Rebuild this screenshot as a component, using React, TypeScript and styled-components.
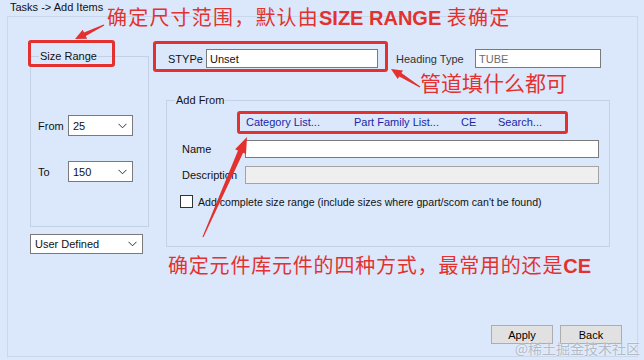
import React from 'react';
import styled, { createGlobalStyle } from 'styled-components';

const RED = '#e3312f';
const BG = '#dbe8fb';

const GlobalStyle = createGlobalStyle`
  html, body { margin: 0; padding: 0; }
  body { background: ${BG}; font-family: "Liberation Sans", Arial, sans-serif; }
`;

const Window = styled.div`
  position: relative;
  width: 644px;
  height: 360px;
  overflow: hidden;
  background: ${BG};
  font-size: 11px;
  color: #111;
`;

const Title = styled.div`
  height: 16px;
  padding-left: 10px;
  line-height: 15px;
  font-size: 11px;
`;

const Frame = styled.div`
  margin-left: 7px;
  width: 631px;
  height: 341px;
  box-sizing: border-box;
  border: 1px solid #c9d7ec;
  display: flex;
  flex-direction: column;
`;

const TopArea = styled.div`
  display: flex;
  height: 237px;
`;

const LeftCol = styled.div`
  margin-left: 22px;
  padding-top: 39px;
  width: 119px;
  display: flex;
  flex-direction: column;
`;

const RightCol = styled.div`
  margin-left: 4px;
  display: flex;
  flex-direction: column;
`;

const GroupBox = styled.div<{ $w: number; $h: number }>`
  position: relative;
  box-sizing: border-box;
  width: ${(p) => p.$w}px;
  height: ${(p) => p.$h}px;
  border: 1px solid #c3d1e7;
  display: flex;
  flex-direction: column;
`;

const Legend = styled.span`
  position: absolute;
  top: -8px;
  left: 8px;
  padding: 0 1px;
  background: ${BG};
  line-height: 14px;
  font-size: 11px;
`;

const SizeRow = styled.div<{ $top: number }>`
  display: flex;
  align-items: center;
  margin-top: ${(p) => p.$top}px;
  padding-left: 7px;
  height: 21px;
`;

const Label = styled.span<{ $w: number }>`
  width: ${(p) => p.$w}px;
  flex: none;
  font-size: 11px;
  white-space: nowrap;
`;

const SelectBox = styled.div<{ $w: number; $h: number }>`
  box-sizing: border-box;
  width: ${(p) => p.$w}px;
  height: ${(p) => p.$h}px;
  border: 1px solid #7a7a7a;
  background: #fff;
  display: flex;
  align-items: center;
  justify-content: space-between;
  padding: 0 5px 0 4px;
  font-size: 11px;
`;

const UserDefined = styled.div`
  margin-top: 7px;
`;

const HeaderRow = styled.div`
  display: flex;
  align-items: center;
  margin-top: 32px;
  padding-left: 15px;
  height: 19px;
`;

const TextInput = styled.div<{ $w: number; $h: number; $muted?: boolean; $disabled?: boolean }>`
  box-sizing: border-box;
  width: ${(p) => p.$w}px;
  height: ${(p) => p.$h}px;
  border: 1px solid ${(p) => (p.$disabled ? '#a3a3a3' : '#7a7a7a')};
  background: ${(p) => (p.$disabled ? '#efefef' : '#fff')};
  color: ${(p) => (p.$muted ? '#6d6d6d' : '#111')};
  padding-left: 3px;
  display: flex;
  align-items: center;
  font-size: 11px;
`;

const HeadingLabel = styled(Label)`
  margin-left: 18px;
  color: #333;
`;

const AddFromWrap = styled.div`
  margin-top: 32px;
  margin-left: 13px;
`;

const LinksRow = styled.div`
  display: grid;
  grid-template-columns: 108px 107px 37px auto;
  margin-top: 13px;
  padding-left: 79px;
  height: 16px;
  align-items: center;
`;

const LinkText = styled.span`
  color: #1c27a8;
  font-size: 11px;
  white-space: nowrap;
`;

const FormRow = styled.div<{ $top: number }>`
  display: flex;
  align-items: center;
  margin-top: ${(p) => p.$top}px;
  padding-left: 15px;
  height: 18px;
`;

const CheckRow = styled.div`
  display: flex;
  align-items: center;
  margin-top: 11px;
  padding-left: 13px;
  height: 13px;
  font-size: 10.6px;
  white-space: nowrap;
`;

const CheckBox = styled.span`
  box-sizing: border-box;
  width: 13px;
  height: 13px;
  border: 1px solid #333;
  background: #fff;
  margin-right: 5px;
  flex: none;
`;

const ButtonRow = styled.div`
  display: flex;
  justify-content: flex-end;
  gap: 7px;
  margin-top: 71px;
  padding-right: 15px;
`;

const Button = styled.div`
  box-sizing: border-box;
  width: 62px;
  height: 19px;
  border: 1px solid #adadad;
  background: #e1e1e1;
  display: flex;
  align-items: center;
  justify-content: center;
  font-size: 11px;
  color: #000;
`;

const Watermark = styled.div`
  position: absolute;
  right: 4px;
  bottom: 4px;
  font-family: "Noto Sans CJK SC", sans-serif;
  font-size: 14px;
  line-height: 16px;
  color: rgba(160, 168, 180, 0.75);
  text-shadow: 0 0 2px rgba(255, 255, 255, 0.8);
`;

/* annotation overlays */
const RedBox = styled.div<{ $x: number; $y: number; $w: number; $h: number }>`
  position: absolute;
  left: ${(p) => p.$x}px;
  top: ${(p) => p.$y}px;
  width: ${(p) => p.$w}px;
  height: ${(p) => p.$h}px;
  box-sizing: border-box;
  border: 3px solid ${RED};
  border-radius: 3px;
`;

const Note = styled.div<{ $x: number; $y: number; $size: number; $track: number }>`
  position: absolute;
  left: ${(p) => p.$x}px;
  top: ${(p) => p.$y}px;
  font-family: "Noto Sans CJK SC", sans-serif;
  font-size: ${(p) => p.$size}px;
  letter-spacing: ${(p) => p.$track}px;
  line-height: 1;
  color: ${RED};
  white-space: nowrap;

  b {
    font-family: "Liberation Sans", "Noto Sans CJK SC", sans-serif;
    font-weight: 700;
    letter-spacing: 0;
  }
`;

const ArrowLayer = styled.svg`
  position: absolute;
  left: 0;
  top: 0;
  pointer-events: none;
`;

const Chevron = () => (
  <svg width="9" height="6" viewBox="0 0 9 6">
    <polyline points="0.5,0.8 4.5,4.8 8.5,0.8" fill="none" stroke="#333" strokeWidth="1" />
  </svg>
);

const Select: React.FC<{ w: number; h: number; value: string }> = ({ w, h, value }) => (
  <SelectBox $w={w} $h={h}>
    <span>{value}</span>
    <Chevron />
  </SelectBox>
);

// tapered annotation arrow, tail -> tip
const arrowPoints = (x1: number, y1: number, x2: number, y2: number, head = 12, hw = 6, sw = 2.5) => {
  const dx = x2 - x1;
  const dy = y2 - y1;
  const len = Math.hypot(dx, dy);
  const ux = dx / len;
  const uy = dy / len;
  const nx = -uy;
  const ny = ux;
  const bx = x2 - ux * head;
  const by = y2 - uy * head;
  const pts = [
    [x1 + nx * 0.6, y1 + ny * 0.6],
    [bx + nx * sw, by + ny * sw],
    [bx + nx * hw, by + ny * hw],
    [x2, y2],
    [bx - nx * hw, by - ny * hw],
    [bx - nx * sw, by - ny * sw],
    [x1 - nx * 0.6, y1 - ny * 0.6],
  ];
  return pts.map(([a, b]) => `${a.toFixed(1)},${b.toFixed(1)}`).join(' ');
};

const App: React.FC = () => {
  return (
    <>
      <GlobalStyle />
      <Window>
        <Title>Tasks -&gt; Add Items</Title>
        <Frame>
          <TopArea>
            <LeftCol>
              <GroupBox $w={119} $h={171}>
                <Legend>Size Range</Legend>
                <SizeRow $top={58}>
                  <Label $w={30}>From</Label>
                  <Select w={65} h={21} value="25" />
                </SizeRow>
                <SizeRow $top={25}>
                  <Label $w={30}>To</Label>
                  <Select w={65} h={21} value="150" />
                </SizeRow>
              </GroupBox>
              <UserDefined>
                <Select w={113} h={20} value="User Defined" />
              </UserDefined>
            </LeftCol>
            <RightCol>
              <HeaderRow>
                <Label $w={38}>STYPe</Label>
                <TextInput $w={172} $h={19}>Unset</TextInput>
                <HeadingLabel $w={79}>Heading Type</HeadingLabel>
                <TextInput $w={126} $h={19} $muted>TUBE</TextInput>
              </HeaderRow>
              <AddFromWrap>
                <GroupBox $w={444} $h={147}>
                  <Legend>Add From</Legend>
                  <LinksRow>
                    <LinkText>Category List...</LinkText>
                    <LinkText>Part Family List...</LinkText>
                    <LinkText>CE</LinkText>
                    <LinkText>Search...</LinkText>
                  </LinksRow>
                  <FormRow $top={10}>
                    <Label $w={63}>Name</Label>
                    <TextInput $w={354} $h={18} />
                  </FormRow>
                  <FormRow $top={8}>
                    <Label $w={63}>Description</Label>
                    <TextInput $w={354} $h={18} $disabled />
                  </FormRow>
                  <CheckRow>
                    <CheckBox />
                    Add complete size range (include sizes where gpart/scom can't be found)
                  </CheckRow>
                </GroupBox>
              </AddFromWrap>
            </RightCol>
          </TopArea>
          <ButtonRow>
            <Button>Apply</Button>
            <Button>Back</Button>
          </ButtonRow>
        </Frame>

        <Watermark>@稀土掘金技术社区</Watermark>

        <RedBox $x={28} $y={40} $w={87} $h={27} />
        <RedBox $x={153} $y={41} $w={235} $h={31} />
        <RedBox $x={237} $y={111} $w={331} $h={23} />

        <Note $x={107} $y={7} $size={20} $track={1.2}>
          确定尺寸范围，默认由<b>SIZE RANGE </b>表确定
        </Note>
        <Note $x={420} $y={72} $size={21} $track={0}>
          管道填什么都可
        </Note>
        <Note $x={168} $y={255} $size={20} $track={0.8}>
          确定元件库元件的四种方式，最常用的还是<b>CE</b>
        </Note>

        <ArrowLayer width={644} height={360} viewBox="0 0 644 360">
          <polygon points={arrowPoints(104, 25, 75, 39, 11, 5, 2)} fill={RED} />
          <polygon points={arrowPoints(420, 87, 391, 69, 11, 5, 2)} fill={RED} />
          <polygon points={arrowPoints(203, 237, 247, 137, 16, 6, 2.8)} fill={RED} />
        </ArrowLayer>
      </Window>
    </>
  );
};

export default App;
